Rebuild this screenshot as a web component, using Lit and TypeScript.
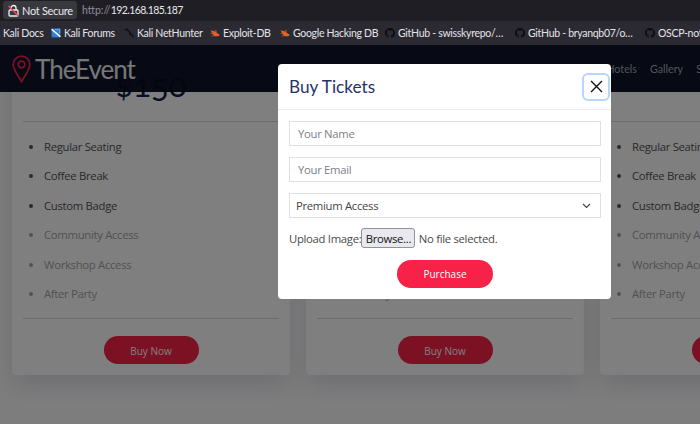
import {html, LitElement, css, svg} from 'lit';
import {customElement} from 'lit/decorators.js';

const GITHUB =
  'M8 0C3.58 0 0 3.58 0 8c0 3.54 2.29 6.53 5.47 7.59.4.07.55-.17.55-.38 0-.19-.01-.82-.01-1.49-2.01.37-2.53-.49-2.69-.94-.09-.23-.48-.94-.82-1.13-.28-.15-.68-.52-.01-.53.63-.01 1.08.58 1.23.82.72 1.21 1.87.87 2.33.66.07-.52.28-.87.51-1.07-1.78-.2-3.64-.89-3.64-3.95 0-.87.31-1.59.82-2.15-.08-.2-.36-1.02.08-2.12 0 0 .67-.21 2.2.82.64-.18 1.32-.27 2-.27.68 0 1.36.09 2 .27 1.53-1.04 2.2-.82 2.2-.82.44 1.1.16 1.92.08 2.12.51.56.82 1.27.82 2.15 0 3.07-1.87 3.75-3.65 3.95.29.25.54.73.54 1.48 0 1.07-.01 1.93-.01 2.2 0 .21.15.46.55.38A8.013 8.013 0 0016 8c0-4.42-3.58-8-8-8z';

const icons: Record<string, unknown> = {
  forums: svg`<rect x="1" y="1" width="14" height="14" fill="#2f7fe0"/><path d="M1 2l14 12" stroke="#fff" stroke-width="2.6"/><path d="M6 2h8v6" stroke="#9cc8f5" fill="none"/>`,
  hunter: svg`<path d="M1 3l4-1 3 4 2 1-1 3 4 1 2 4" stroke="#0c0c10" stroke-width="2" fill="none"/>`,
  exploit: svg`<path d="M1 4l7 1 5 4 3 2-3 2-6 0-3-4z" fill="#e8601f"/><path d="M1 9l3-1M3 14l3-3M9 3l1 3" stroke="#f08a3c" stroke-width="1"/>`,
  github: svg`<path d="${GITHUB}" fill="#0d0d11"/>`,
};

const BOOKMARKS = [
  {label: 'Kali Docs', width: 48},
  {label: 'Kali Forums', icon: 'forums', width: 73},
  {label: 'Kali NetHunter', icon: 'hunter', width: 86},
  {label: 'Exploit-DB', icon: 'exploit', width: 70},
  {label: 'Google Hacking DB', icon: 'exploit', width: 105},
  {label: 'GitHub - swisskyrepo/…', icon: 'github', width: 130},
  {label: 'GitHub - bryanqb07/o…', icon: 'github', width: 130},
  {label: 'OSCP-notes', icon: 'github', width: 70},
];

const FEATURES = [
  {label: 'Regular Seating', on: true},
  {label: 'Coffee Break', on: true},
  {label: 'Custom Badge', on: true},
  {label: 'Community Access', on: false},
  {label: 'Workshop Access', on: false},
  {label: 'After Party', on: false},
];

@customElement('app-root')
export class AppRoot extends LitElement {
  static styles = css`
    :host {
      display: flex;
      flex-direction: column;
      height: 100vh;
      overflow: hidden;
      font-family: 'Open Sans', 'Noto Sans', sans-serif;
      color: #4a4a4a;
    }

    /* browser chrome */
    .toolbar {
      height: 21px;
      flex: none;
      display: flex;
      align-items: flex-start;
      background: #1f1e24;
      font-family: Lato, sans-serif;
      padding: 1px 0 0 3px;
      box-sizing: border-box;
    }
    .pill {
      display: flex;
      align-items: center;
      gap: 3px;
      width: 74px;
      height: 18px;
      box-sizing: border-box;
      padding-left: 5px;
      border-radius: 3px;
      background: #38383f;
      color: #e8e8ea;
      font-size: 11px;
      letter-spacing: -0.3px;
      white-space: nowrap;
    }
    .pill svg {
      flex: none;
    }
    .url {
      margin-left: 5px;
      font-size: 10.5px;
      line-height: 18px;
      letter-spacing: -0.55px;
      color: #e8e8ea;
    }
    .url span {
      color: #8f8f96;
      letter-spacing: 0;
    }
    .bookmarks {
      height: 24px;
      flex: none;
      display: flex;
      align-items: center;
      padding-left: 3px;
      background: #2b2a33;
      color: #e4e4e8;
      font-family: Lato, sans-serif;
      font-size: 10.5px;
      letter-spacing: -0.3px;
      white-space: nowrap;
      overflow: hidden;
    }
    .bookmark {
      display: flex;
      align-items: center;
      gap: 3px;
      flex: none;
    }
    .bookmark svg {
      width: 10px;
      height: 10px;
      flex: none;
    }

    /* page behind the modal */
    .page {
      position: relative;
      flex: 1;
      min-height: 0;
      background: #fbfbfd;
      overflow: hidden;
    }
    .site-header {
      position: relative;
      z-index: 1;
      height: 47px;
      display: flex;
      align-items: center;
      padding-left: 12px;
      background: rgba(6, 12, 34, 0.97);
      color: #fff;
      white-space: nowrap;
    }
    .logo {
      display: flex;
      align-items: center;
      gap: 4px;
      font-family: Lato, sans-serif;
      font-size: 26px;
      letter-spacing: -1px;
      flex: none;
    }
    .logo span {
      color: #eee;
    }
    .nav {
      display: flex;
      gap: 13px;
      margin-left: auto;
      margin-right: -39px;
      font-family: Lato, sans-serif;
      font-size: 10.7px;
      color: rgba(202, 206, 221, 0.8);
    }
    .cards {
      display: flex;
      gap: 16px;
      margin-top: -32px;
      padding-left: 12px;
    }
    .card {
      width: 278px;
      height: 315px;
      flex: none;
      box-sizing: border-box;
      padding: 0 11px;
      background: #fff;
      border-radius: 4px;
      box-shadow: 0 10px 25px 0 rgba(6, 12, 34, 0.12);
      display: flex;
      flex-direction: column;
    }
    .price {
      height: 62px;
      box-sizing: border-box;
      padding-top: 4px;
      text-align: center;
      font-family: Lato, sans-serif;
      font-size: 33px;
      line-height: 40px;
      color: #0e1b4d;
      font-feature-settings: 'onum';
      border-bottom: 1px solid #d9d9d9;
    }
    ul {
      margin: 0;
      padding: 10px 0 10px 21px;
      font-size: 11.3px;
      letter-spacing: -0.3px;
      line-height: 29.4px;
      height: 197px;
      box-sizing: border-box;
      border-bottom: 1px solid #d9d9d9;
      color: #525252;
    }
    li.off {
      color: #a4a4a4;
    }
    .buy {
      align-self: center;
      width: 95px;
      height: 28px;
      box-sizing: border-box;
      padding-top: 1px;
      margin-top: 17px;
      border-radius: 14px;
      background: #f82249;
      box-shadow: 0 0 0 1px rgba(255, 255, 255, 0.3);
      color: #fff;
      font-size: 10px;
      display: flex;
      align-items: center;
      justify-content: center;
    }
    .backdrop {
      position: absolute;
      inset: 0;
      z-index: 2;
      background: rgba(0, 0, 0, 0.5);
    }

    /* modal */
    .modal {
      position: absolute;
      z-index: 3;
      left: 278px;
      top: 19px;
      width: 333px;
      height: 235px;
      box-sizing: border-box;
      background: #fff;
      border-radius: 4px;
      display: flex;
      flex-direction: column;
    }
    .modal-head {
      height: 46px;
      flex: none;
      box-sizing: border-box;
      display: flex;
      align-items: center;
      justify-content: space-between;
      padding: 0 3px 0 11px;
      border-bottom: 1px solid #e9ecef;
    }
    h4 {
      margin: 0;
      font-family: Lato, sans-serif;
      font-weight: 400;
      font-size: 17.2px;
      color: #26326a;
    }
    .close {
      width: 24px;
      height: 24px;
      padding: 0;
      box-sizing: border-box;
      display: flex;
      align-items: center;
      justify-content: center;
      background: #fff;
      border: none;
      border-radius: 4px;
      box-shadow: 0 0 0 2px #b9d5fb;
    }
    form {
      display: flex;
      flex-direction: column;
      gap: 11px;
      padding: 11px 10px 0 11px;
    }
    input,
    .select {
      width: 100%;
      height: 25px;
      box-sizing: border-box;
      border: 1px solid #dde0e6;
      font-family: inherit;
      font-size: 11.3px;
      letter-spacing: -0.3px;
      color: #444;
      background: #fff;
    }
    input {
      padding: 0 8px;
    }
    input::placeholder {
      color: #7b8088;
      opacity: 1;
    }
    .select {
      display: flex;
      align-items: center;
      justify-content: space-between;
      padding: 0 9px 0 6px;
    }
    .upload {
      display: flex;
      align-items: center;
      height: 20px;
      margin-top: -1px;
      font-size: 11.3px;
      letter-spacing: -0.3px;
      white-space: nowrap;
    }
    .browse {
      height: 20px;
      width: 54px;
      padding: 0;
      margin-right: 3.5px;
      box-sizing: border-box;
      border: 1px solid #8f8f9d;
      border-radius: 3px;
      background: #e9e9ed;
      font-family: inherit;
      font-size: 11.3px;
      letter-spacing: -0.3px;
      color: #111;
    }
    .purchase {
      align-self: center;
      width: 96px;
      height: 28px;
      margin-top: 1px;
      border: none;
      border-radius: 14px;
      background: #f82249;
      color: #fff;
      font-family: inherit;
      font-size: 10px;
    }
  `;

  renderCard() {
    return html`
      <section class="card">
        <div class="price">$150</div>
        <ul>
          ${FEATURES.map((f) => html`<li class=${f.on ? '' : 'off'}>${f.label}</li>`)}
        </ul>
        <div class="buy">Buy Now</div>
      </section>
    `;
  }

  render() {
    return html`
      <div class="toolbar">
        <div class="pill">
          <svg width="11" height="13" viewBox="0 0 11 13">
            <path d="M3 6V4a2.5 2.5 0 015 0v2" fill="none" stroke="#eee" stroke-width="1.3"/>
            <rect x="1" y="6" width="9" height="6" rx="1" fill="none" stroke="#eee" stroke-width="1.3"/>
            <path d="M0.5 2L10.5 12" stroke="#f0465a" stroke-width="1.4"/>
          </svg>
          Not Secure
        </div>
        <div class="url"><span>http://</span>192.168.185.187</div>
      </div>
      <div class="bookmarks">
        ${BOOKMARKS.map(
          (b) => html`
            <div class="bookmark" style="width:${b.width}px">
              ${b.icon ? html`<svg viewBox="0 0 16 16">${icons[b.icon]}</svg>` : ''}
              <span>${b.label}</span>
            </div>
          `
        )}
      </div>
      <div class="page">
        <header class="site-header">
          <div class="logo">
            <svg width="19" height="28" viewBox="0 0 19 28">
              <path d="M9.5 26.5C5 19 1.2 14.5 1.2 9.5a8.3 8.3 0 0116.6 0c0 5-3.8 9.5-8.3 17z" fill="none" stroke="#f82249" stroke-width="1.8"/>
              <circle cx="9.5" cy="9.5" r="3.3" fill="none" stroke="#f82249" stroke-width="1.8"/>
            </svg>
            <span>TheEvent</span>
          </div>
          <nav class="nav">
            <span>Hotels</span><span>Gallery</span><span>Sponsors</span>
          </nav>
        </header>
        <div class="cards">${this.renderCard()}${this.renderCard()}${this.renderCard()}</div>
        <div class="backdrop"></div>
        <div class="modal">
          <div class="modal-head">
            <h4>Buy Tickets</h4>
            <button class="close" aria-label="Close">
              <svg width="13" height="13" viewBox="0 0 13 13">
                <path d="M1 1l11 11M12 1L1 12" stroke="#111" stroke-width="1.4"/>
              </svg>
            </button>
          </div>
          <form>
            <input type="text" placeholder="Your Name" />
            <input type="text" placeholder="Your Email" />
            <div class="select">
              <span>Premium Access</span>
              <svg width="9" height="6" viewBox="0 0 9 6">
                <path d="M1 1l3.5 3.5L8 1" fill="none" stroke="#444" stroke-width="1.2"/>
              </svg>
            </div>
            <div class="upload">
              Upload Image:<button type="button" class="browse">Browse...</button>No file selected.
            </div>
            <button type="button" class="purchase">Purchase</button>
          </form>
        </div>
      </div>
    `;
  }
}
